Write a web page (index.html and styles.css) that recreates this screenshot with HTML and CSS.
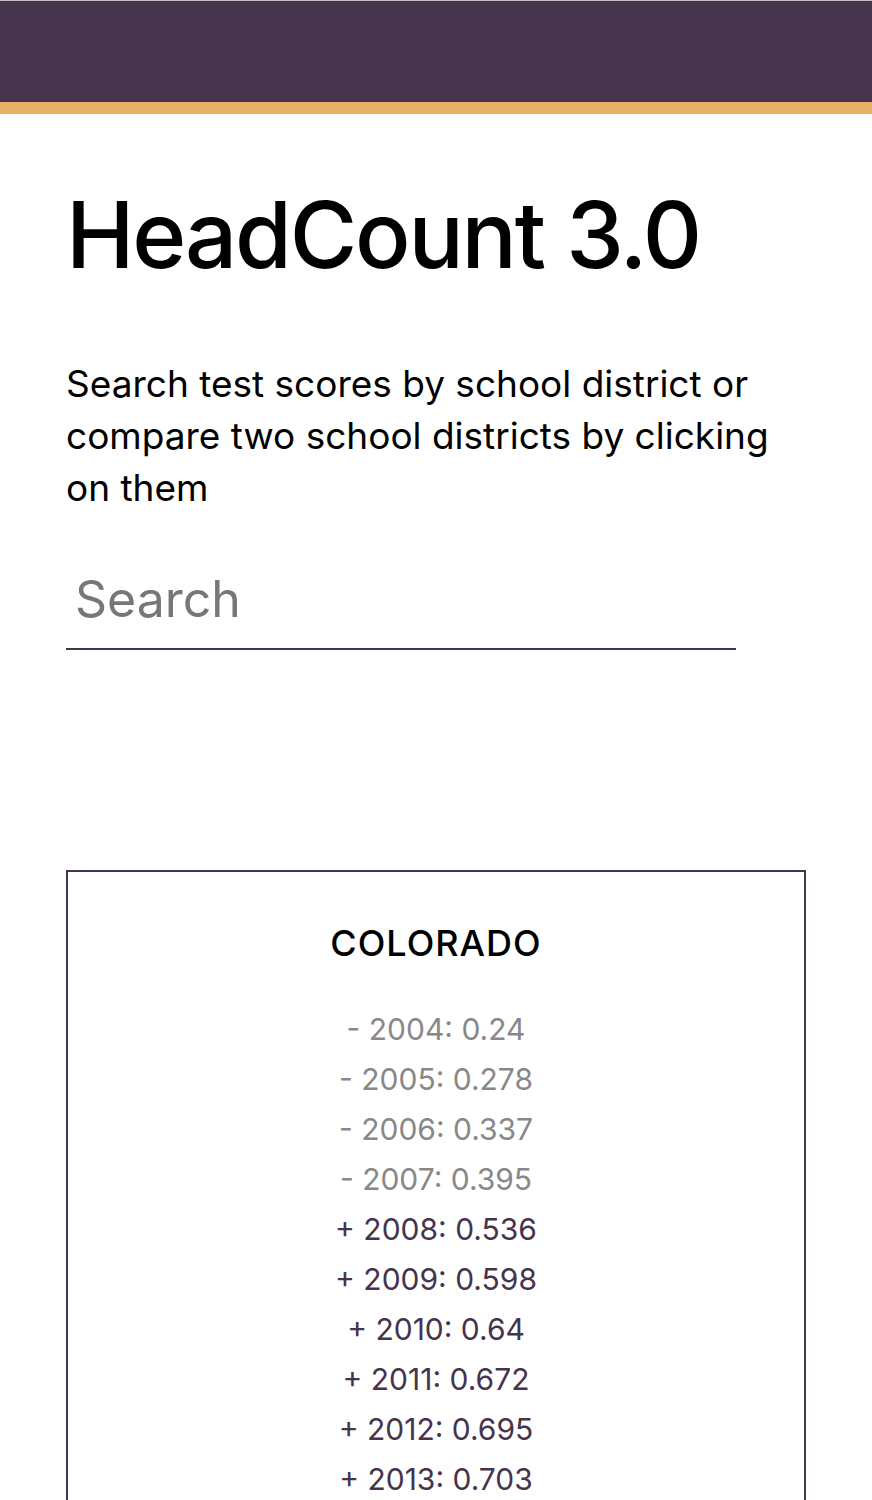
FILE: index.html
```html
<!DOCTYPE html>
<html lang="en">
<head>
<meta charset="utf-8">
<title>HeadCount 3.0</title>
<link rel="stylesheet" href="styles.css">
</head>
<body>
<header class="topbar"></header>
<main class="page">
  <h1 class="title">HeadCount 3.0</h1>
  <p class="intro">Search test scores by school district or compare two school districts by clicking on them</p>
  <input class="search" type="text" placeholder="Search">
  <section class="card">
    <h2 class="card-title">COLORADO</h2>
    <ul class="years">
      <li class="down">- 2004: 0.24</li>
      <li class="down">- 2005: 0.278</li>
      <li class="down">- 2006: 0.337</li>
      <li class="down">- 2007: 0.395</li>
      <li class="up">+ 2008: 0.536</li>
      <li class="up">+ 2009: 0.598</li>
      <li class="up">+ 2010: 0.64</li>
      <li class="up">+ 2011: 0.672</li>
      <li class="up">+ 2012: 0.695</li>
      <li class="up">+ 2013: 0.703</li>
      <li class="up">+ 2014: 0.724</li>
    </ul>
  </section>
</main>
</body>
</html>
```
FILE: styles.css
```css
html, body {
  margin: 0;
  padding: 0;
  background: #ffffff;
}
body {
  font-family: "Inter", "Liberation Sans", sans-serif;
  color: #000;
  border-top: 1px solid #c4c0c5;
}
.topbar {
  height: 101px;
  background: #46334c;
  border-bottom: 12px solid #e8b062;
}
.page {
  padding: 0 66px;
}
.title {
  margin: 66px 0 0;
  font-size: 92px;
  font-weight: 500;
  line-height: 110px;
  letter-spacing: -2.2px;
}
.intro {
  margin: 68px 0 0;
  font-size: 37px;
  font-weight: 400;
  line-height: 52px;
  letter-spacing: 0;
}
.search {
  display: block;
  box-sizing: border-box;
  width: 670px;
  height: 90px;
  margin: 46px 0 0;
  padding: 0 10px 10px 9px;
  border: none;
  border-bottom: 2px solid #46334c;
  outline: none;
  font-family: inherit;
  font-size: 50px;
  color: #000;
  background: transparent;
}
.search::placeholder {
  color: #777;
}
.card {
  box-sizing: border-box;
  width: 740px;
  margin-top: 220px;
  padding: 49px 0 40px;
  border: 2px solid #46334c;
  text-align: center;
}
.card-title {
  margin: 0;
  font-size: 36px;
  font-weight: 500;
  line-height: 44px;
  letter-spacing: 1px;
}
.years {
  list-style: none;
  margin: 39px 0 0;
  padding: 0;
}
.years li {
  font-size: 30px;
  line-height: 50px;
}
.years .down {
  color: #888888;
}
.years .up {
  color: #46334c;
}
```
